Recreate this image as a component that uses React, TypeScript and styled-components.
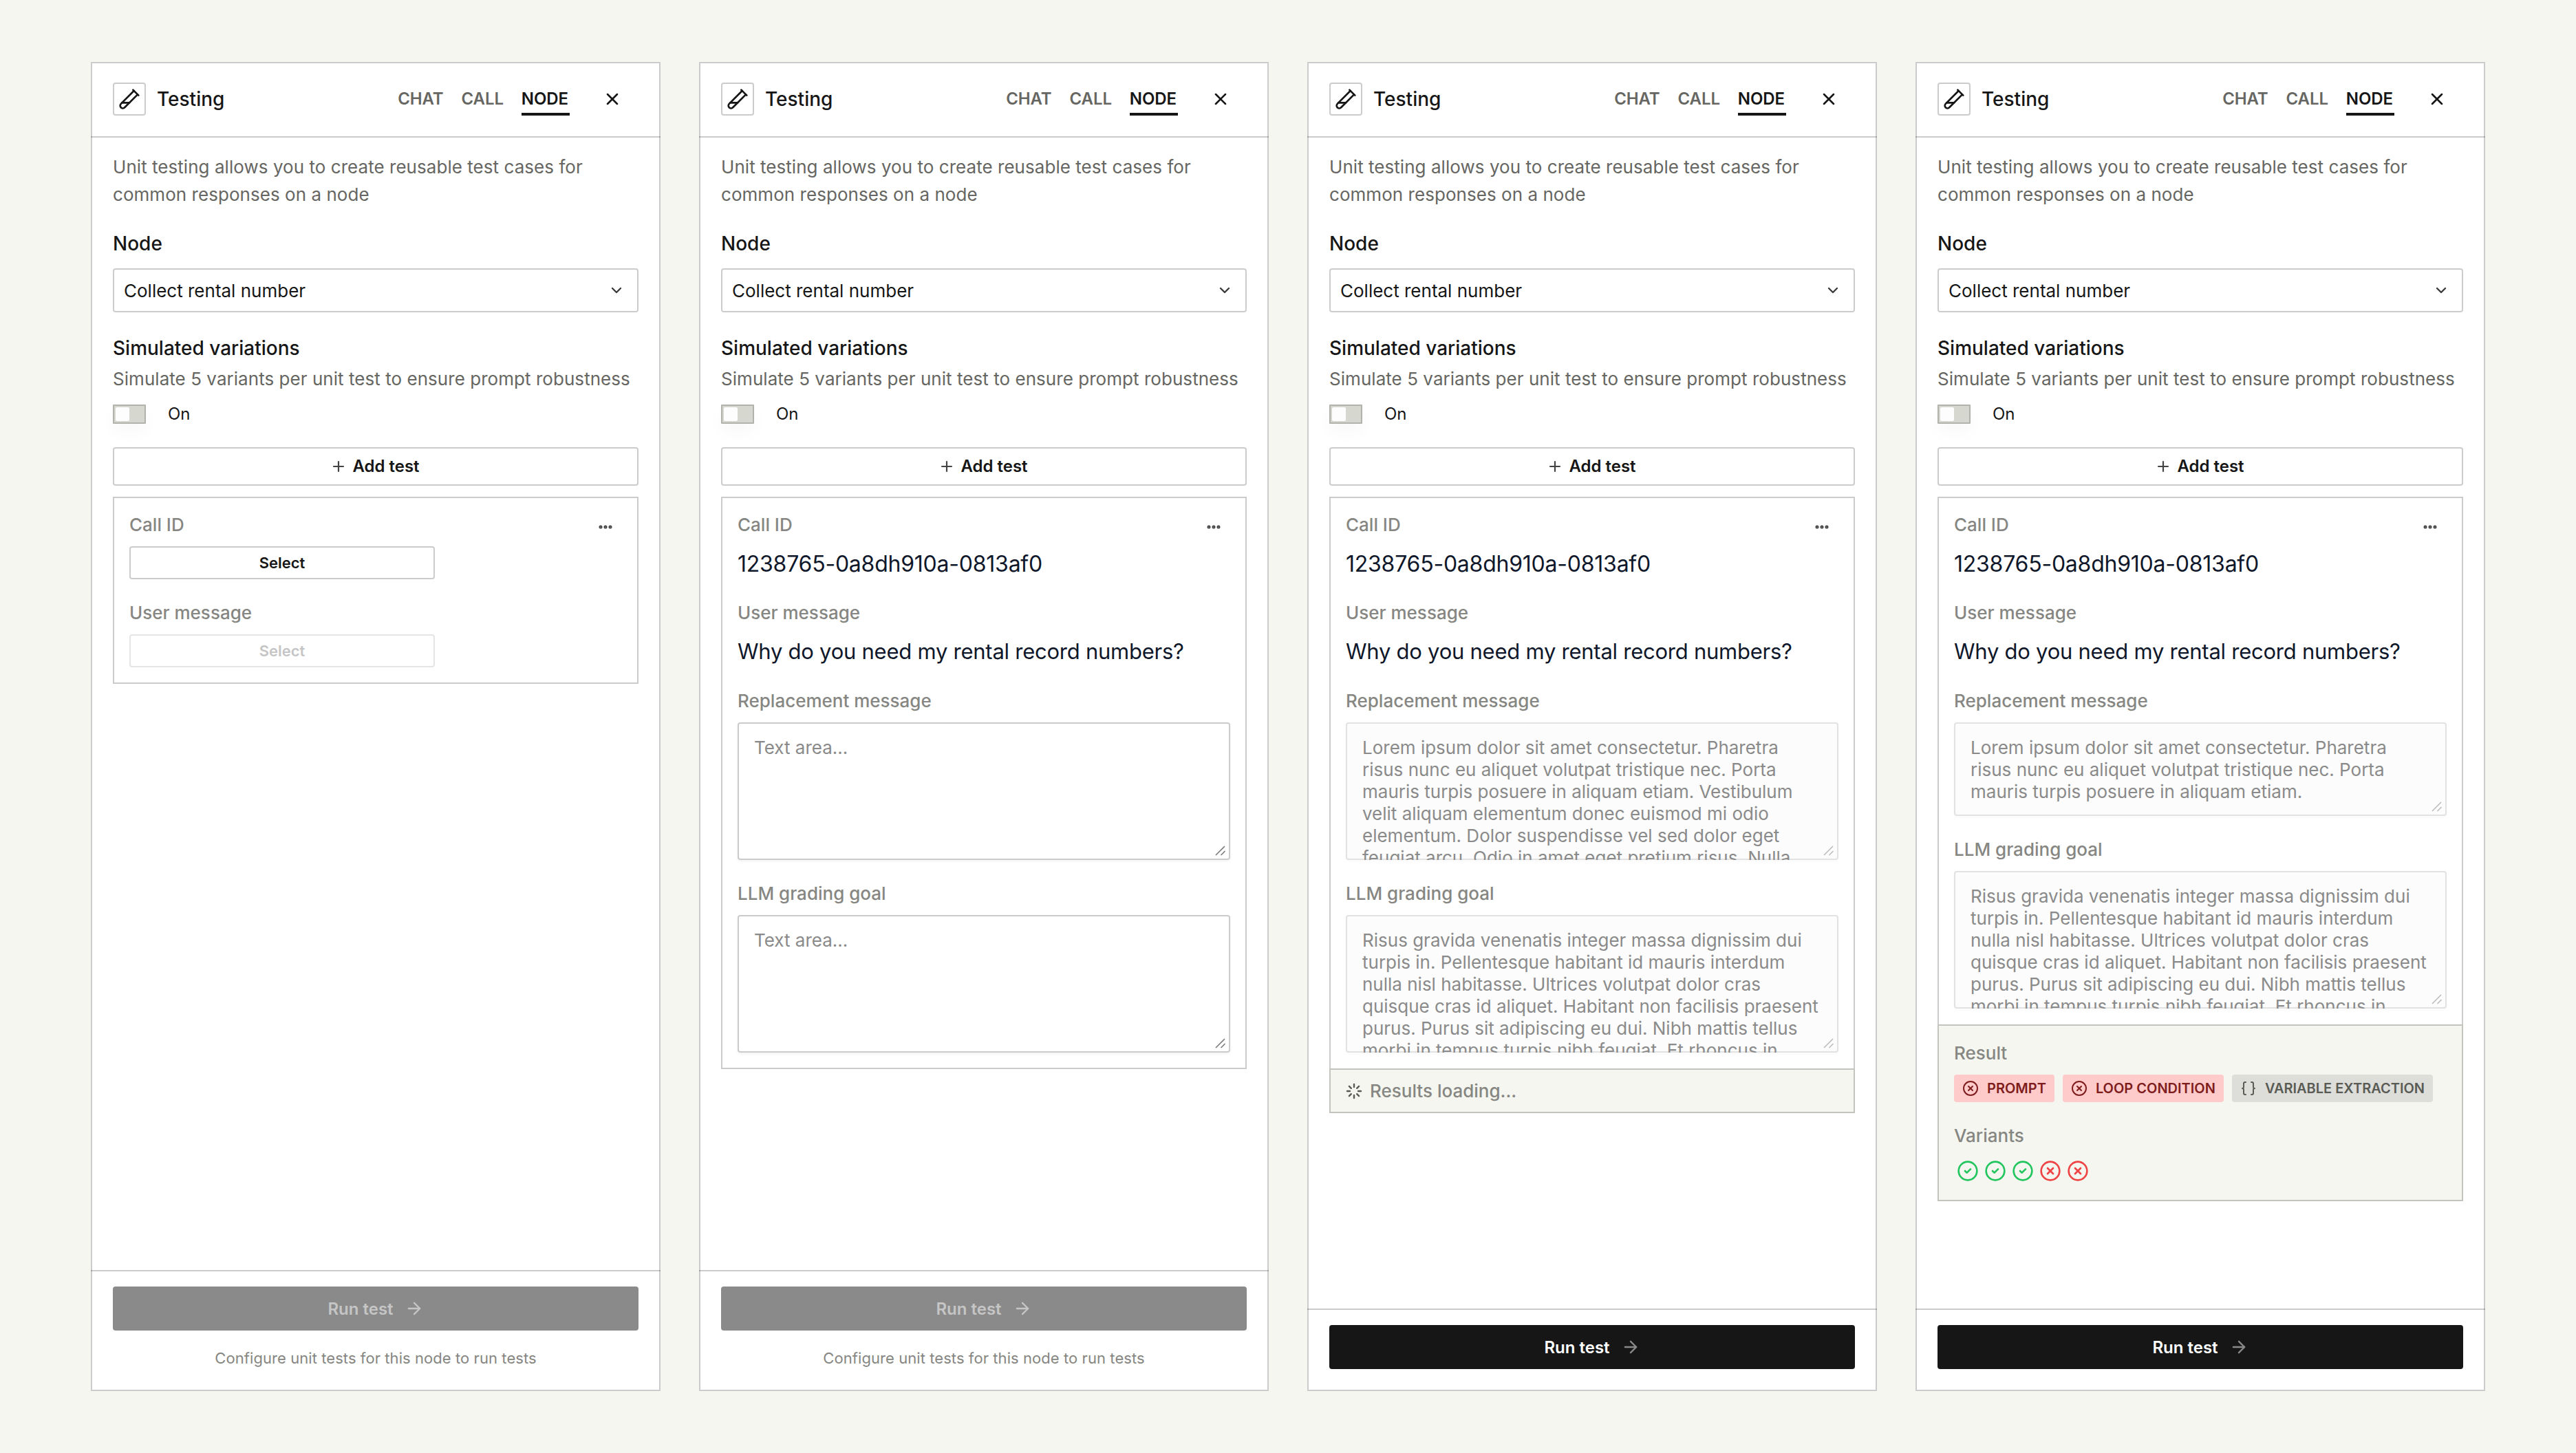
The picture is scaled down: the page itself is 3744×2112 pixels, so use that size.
import React from "react";
import styled, { createGlobalStyle, css } from "styled-components";
import {
  ArrowRight,
  Braces,
  ChevronDown,
  CircleCheck,
  CircleX,
  Ellipsis,
  Loader,
  Plus,
  TestTubeDiagonal,
  X,
} from "lucide-react";

const ink = "#161616";
const body = "#666662";
const muted = "#868682";
const canvas = "#f5f6f0";
const line = "rgba(0, 0, 0, 0.2)";

const GlobalStyle = createGlobalStyle`
  * {
    box-sizing: border-box;
  }
  body {
    margin: 0;
    background: ${canvas};
    color: ${ink};
    font-family: "Inter", "Liberation Sans", sans-serif;
  }
  button {
    font-family: inherit;
  }
`;

const Board = styled.main`
  display: flex;
  gap: 56px;
  padding: 90px 132px;
`;

const Panel = styled.section`
  display: flex;
  flex-direction: column;
  width: 828px;
  height: 1932px;
  background: #fff;
  border: 2px solid ${line};
`;

const Header = styled.header`
  display: flex;
  align-items: flex-start;
  height: 108px;
  margin: 0 -2px;
  padding: 28px 56px 0 32px;
  border-bottom: 2px solid ${line};
`;

const IconBox = styled.div`
  display: flex;
  align-items: center;
  justify-content: center;
  width: 48px;
  height: 48px;
  border: 2px solid ${line};
  border-radius: 4px;
`;

const Title = styled.h1`
  flex: 1;
  margin: 0 0 0 16px;
  font-size: 28px;
  font-weight: 500;
  line-height: 48px;
`;

const Tabs = styled.nav`
  display: flex;
  gap: 24px;
  margin-right: 48px;
`;

const Tab = styled.span<{ $active?: boolean }>`
  height: 48px;
  padding: 2px 2px 0 0;
  font-size: 24px;
  font-weight: 600;
  line-height: 44px;
  letter-spacing: -0.1px;
  color: ${({ $active }) => ($active ? ink : body)};
  border-bottom: 4px solid ${({ $active }) => ($active ? ink : "transparent")};
`;

const CloseButton = styled.button`
  display: flex;
  align-items: center;
  height: 48px;
  padding: 0;
  color: ${ink};
  background: none;
  border: 0;
`;

const Content = styled.div`
  flex: 1;
  padding: 23px 30px 0;
`;

const Description = styled.p`
  margin: 0 0 35px;
  font-size: 26px;
  line-height: 40px;
  letter-spacing: 0.045px;
  color: ${body};
`;

const FieldTitle = styled.h2`
  margin: 0;
  font-size: 28px;
  font-weight: 500;
  line-height: 32px;
`;

const Select = styled.div`
  display: flex;
  align-items: center;
  justify-content: space-between;
  height: 64px;
  margin: 20px 0 36px;
  padding: 0 18px 0 14px;
  font-size: 26px;
  border: 2px solid ${line};
  border-radius: 4px;
`;

const Hint = styled.p`
  margin: 13px 0 21px;
  font-size: 26px;
  line-height: 32px;
  letter-spacing: 0.045px;
  white-space: nowrap;
  color: ${body};
`;

const ToggleRow = styled.div`
  display: flex;
  align-items: center;
  gap: 32px;
  height: 28px;
  margin-bottom: 34px;
  font-size: 24px;
  line-height: 30px;
`;

const Toggle = styled.div`
  width: 48px;
  height: 28px;
  padding: 2px;
  background: #d6d7cf;
  border: 2px solid #b1b2ab;
  border-radius: 1px;
  box-shadow: 0 12px 24px rgba(0, 0, 0, 0.03);
`;

const Thumb = styled.div`
  width: 20px;
  height: 20px;
  background: #fdfdfd;
  border-radius: 2px;
`;

const OutlineButton = styled.button<{ $small?: boolean }>`
  display: flex;
  align-items: center;
  justify-content: center;
  gap: 8px;
  width: ${({ $small }) => ($small ? "444px" : "100%")};
  height: ${({ $small }) => ($small ? "48px" : "56px")};
  padding: ${({ $small }) => ($small ? "0" : "0 2px 1px 0")};
  font-size: ${({ $small }) => ($small ? "22px" : "24px")};
  font-weight: 600;
  color: ${ink};
  background: #fff;
  border: 2px solid ${line};
  border-radius: 4px;

  &:disabled {
    color: #c5c5c5;
    border-color: rgba(0, 0, 0, 0.1);
  }
`;

const Card = styled.div`
  margin-top: 16px;
  border: 2px solid ${line};
`;

const CardBody = styled.div`
  display: flex;
  flex-direction: column;
  gap: 32px;
  padding: 22px;
`;

const Field = styled.div`
  display: flex;
  flex-direction: column;
  gap: 14px;
`;

const LabelRow = styled.div`
  display: flex;
  align-items: flex-end;
  justify-content: space-between;
  padding-right: 12px;

  svg {
    margin-bottom: 2px;
  }
`;

const Label = styled.div`
  font-size: 26px;
  font-weight: 500;
  line-height: 34px;
  color: ${muted};
`;

const Value = styled.div<{ $tight?: boolean }>`
  height: 48px;
  font-size: ${({ $tight }) => ($tight ? "31px" : "32px")};
  line-height: ${({ $tight }) => ($tight ? "50px" : "52px")};
  letter-spacing: ${({ $tight }) => ($tight ? "-0.25px" : "-0.23px")};
  white-space: nowrap;
  color: #0f172a;
`;

const TextAreaBox = styled.div<{ $filled: boolean; $short?: boolean }>`
  position: relative;
  height: ${({ $short }) => ($short ? "136px" : "200px")};
  padding: 21px 24px 0;
  overflow: hidden;
  font-size: 26px;
  line-height: 32px;
  white-space: pre;
  color: #8a8a8a;
  background: ${({ $filled }) => ($filled ? "#fcfcfc" : "#fff")};
  border-radius: 4px;
  ${({ $filled }) => css`
    box-shadow: inset 0 0 0 2px ${$filled ? "#e2e2e2" : "#cbcbcb"},
      0 2px 4px rgba(0, 0, 0, ${$filled ? 0.025 : 0.05});
  `}
`;

const Grip = styled.svg<{ $faded: boolean }>`
  position: absolute;
  right: 6px;
  bottom: 6px;
  opacity: ${({ $faded }) => ($faded ? 0.5 : 1)};
`;

const ResultBox = styled.div`
  display: flex;
  flex-direction: column;
  gap: 32px;
  margin: 1px -2px -2px;
  padding: 23px 22px 22px;
  background: ${canvas};
  border: 2px solid #c4c4bf;
`;

const LoadingBox = styled(ResultBox)`
  flex-direction: row;
  align-items: center;
  gap: 11px;
  height: 65px;
  padding: 1px 22px 0;
  color: #5a5a56;
`;

const BadgeRow = styled.div`
  display: flex;
  gap: 12px;
`;

const Badge = styled.div<{ $neutral?: boolean }>`
  display: flex;
  align-items: center;
  gap: 12px;
  height: 40px;
  padding: 0 12px;
  font-size: 20px;
  font-weight: 600;
  color: ${({ $neutral }) => ($neutral ? "#5a5b55" : "#7f1d1d")};
  background: ${({ $neutral }) => ($neutral ? "#dddeda" : "#fecaca")};
  border-radius: 4px;
`;

const VariantRow = styled.div`
  display: flex;
  gap: 8px;
  padding: 4px;
`;

const Footer = styled.footer`
  display: flex;
  flex-direction: column;
  gap: 24px;
  margin: 0 -2px;
  padding: 22px 32px 30px;
  border-top: 2px solid ${line};
`;

const RunButton = styled.button`
  display: flex;
  align-items: center;
  justify-content: center;
  gap: 16px;
  height: 64px;
  padding: 0;
  font-size: 24px;
  font-weight: 600;
  color: #fff;
  background: ${ink};
  border: 0;
  border-radius: 4px;

  svg {
    color: #8a8a8a;
  }

  &:disabled,
  &:disabled svg {
    color: #c5c5c5;
  }

  &:disabled {
    background: #8a8a8a;
  }
`;

const Caption = styled.p`
  margin: 0;
  font-size: 22px;
  line-height: 32px;
  letter-spacing: 0.07px;
  text-align: center;
  color: ${muted};
`;

const lorem = [
  "Lorem ipsum dolor sit amet consectetur. Pharetra",
  "risus nunc eu aliquet volutpat tristique nec. Porta",
  "mauris turpis posuere in aliquam etiam. Vestibulum",
  "velit aliquam elementum donec euismod mi odio",
  "elementum. Dolor suspendisse vel sed dolor eget",
  "feugiat arcu. Odio in amet eget pretium risus. Nulla",
].join("\n");

const shortLorem = [
  "Lorem ipsum dolor sit amet consectetur. Pharetra",
  "risus nunc eu aliquet volutpat tristique nec. Porta",
  "mauris turpis posuere in aliquam etiam.",
].join("\n");

const goal = [
  "Risus gravida venenatis integer massa dignissim dui",
  "turpis in. Pellentesque habitant id mauris interdum",
  "nulla nisl habitasse. Ultrices volutpat dolor cras",
  "quisque cras id aliquet. Habitant non facilisis praesent",
  "purus. Purus sit adipiscing eu dui. Nibh mattis tellus",
  "morbi in tempus turpis nibh feugiat. Et rhoncus in",
].join("\n");

function TextArea({ value, short }: { value?: string; short?: boolean }) {
  return (
    <TextAreaBox $filled={!!value} $short={short}>
      {value || "Text area..."}
      <Grip
        $faded={!!value}
        width="16"
        height="16"
        viewBox="0 0 16 16"
        stroke="#7c7c7c"
        strokeWidth="1.6"
      >
        <path d="M1 15 14 2M8.5 15 14.5 9" />
      </Grip>
    </TextAreaBox>
  );
}

type PanelProps = {
  selected?: boolean;
  replacement?: string;
  shortReplacement?: boolean;
  grading?: string;
  ready?: boolean;
  result?: React.ReactNode;
};

function TestingPanel({
  selected,
  replacement,
  shortReplacement,
  grading,
  ready,
  result,
}: PanelProps) {
  return (
    <Panel>
      <Header>
        <IconBox>
          <TestTubeDiagonal size={32} />
        </IconBox>
        <Title>Testing</Title>
        <Tabs>
          <Tab>CHAT</Tab>
          <Tab>CALL</Tab>
          <Tab $active>NODE</Tab>
        </Tabs>
        <CloseButton>
          <X size={28} strokeWidth={2.2} />
        </CloseButton>
      </Header>
      <Content>
        <Description>
          Unit testing allows you to create reusable test cases for common
          responses on a node
        </Description>
        <FieldTitle>Node</FieldTitle>
        <Select>
          <span>Collect rental number</span>
          <ChevronDown size={24} strokeWidth={2.4} color="#3c3c3c" />
        </Select>
        <FieldTitle>Simulated variations</FieldTitle>
        <Hint>
          Simulate 5 variants per unit test to ensure prompt robustness
        </Hint>
        <ToggleRow>
          <Toggle>
            <Thumb />
          </Toggle>
          <span>On</span>
        </ToggleRow>
        <OutlineButton>
          <Plus size={24} strokeWidth={2.2} color="#444" />
          <span>Add test</span>
        </OutlineButton>
        <Card>
          <CardBody>
            <Field>
              <LabelRow>
                <Label>Call ID</Label>
                <Ellipsis size={24} strokeWidth={3} color="#444" />
              </LabelRow>
              {selected ? (
                <Value>1238765-0a8dh910a-0813af0</Value>
              ) : (
                <OutlineButton $small>Select</OutlineButton>
              )}
            </Field>
            <Field>
              <Label>User message</Label>
              {selected ? (
                <Value $tight>Why do you need my rental record numbers?</Value>
              ) : (
                <OutlineButton $small disabled>
                  Select
                </OutlineButton>
              )}
            </Field>
            {selected && (
              <>
                <Field>
                  <Label>Replacement message</Label>
                  <TextArea value={replacement} short={shortReplacement} />
                </Field>
                <Field>
                  <Label>LLM grading goal</Label>
                  <TextArea value={grading} />
                </Field>
              </>
            )}
          </CardBody>
          {result}
        </Card>
      </Content>
      <Footer>
        <RunButton disabled={!ready}>
          <span>Run test</span>
          <ArrowRight size={28} />
        </RunButton>
        {!ready && (
          <Caption>Configure unit tests for this node to run tests</Caption>
        )}
      </Footer>
    </Panel>
  );
}

export default function App() {
  return (
    <>
      <GlobalStyle />
      <Board>
        <TestingPanel />
        <TestingPanel selected />
        <TestingPanel
          selected
          replacement={lorem}
          grading={goal}
          ready
          result={
            <LoadingBox>
              <Loader size={24} strokeWidth={2.4} />
              <Label>Results loading...</Label>
            </LoadingBox>
          }
        />
        <TestingPanel
          selected
          replacement={shortLorem}
          shortReplacement
          grading={goal}
          ready
          result={
            <ResultBox>
              <Field>
                <Label>Result</Label>
                <BadgeRow>
                  <Badge>
                    <CircleX size={24} />
                    <span>PROMPT</span>
                  </Badge>
                  <Badge>
                    <CircleX size={24} />
                    <span>LOOP CONDITION</span>
                  </Badge>
                  <Badge $neutral>
                    <Braces size={24} />
                    <span>VARIABLE EXTRACTION</span>
                  </Badge>
                </BadgeRow>
              </Field>
              <Field>
                <Label>Variants</Label>
                <VariantRow>
                  <CircleCheck size={32} color="#22c55e" />
                  <CircleCheck size={32} color="#22c55e" />
                  <CircleCheck size={32} color="#22c55e" />
                  <CircleX size={32} color="#ef4444" />
                  <CircleX size={32} color="#ef4444" />
                </VariantRow>
              </Field>
            </ResultBox>
          }
        />
      </Board>
    </>
  );
}
